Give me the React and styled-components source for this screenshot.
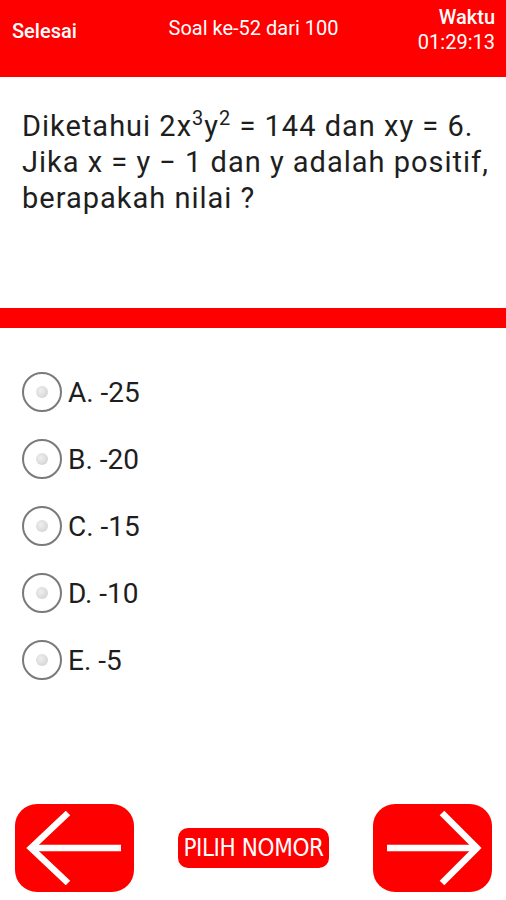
import React from "react";
import styled, { createGlobalStyle } from "styled-components";

const Global = createGlobalStyle`
  html, body { margin: 0; padding: 0; background: #fff; }
  body { font-family: Roboto, "Noto Sans", sans-serif; }
`;

const Page = styled.div`
  width: 506px;
  height: 900px;
  display: flex;
  flex-direction: column;
  background: #fff;
  overflow: hidden;
`;

const Header = styled.header`
  height: 77px;
  flex: none;
  background: #ff0000;
  color: #fff;
  display: grid;
  grid-template-columns: 1fr auto 1fr;
  align-items: start;
  padding: 0 11px 0 12px;
  font-size: 20px;
  line-height: 24px;
`;

const HeaderLeft = styled.div`
  padding-top: 19px;
  font-weight: 500;
`;

const HeaderCenter = styled.div`
  padding-top: 16px;
`;

const HeaderRight = styled.div`
  display: flex;
  flex-direction: column;
  align-items: flex-end;
  padding-top: 5px;
  font-weight: 500;
`;

const Time = styled.span`
  font-weight: 400;
  margin-top: 1px;
`;

const Question = styled.div`
  height: 231px;
  flex: none;
  padding: 31px 10px 0 22px;
  box-sizing: border-box;
  font-size: 29px;
  line-height: 36px;
  letter-spacing: 1px;
  color: #1e1e1e;
  white-space: nowrap;
`;

const Sup = styled.sup`
  font-size: 20px;
  line-height: 0;
  vertical-align: 11px;
`;

const Stripe = styled.div`
  height: 20px;
  flex: none;
  background: #ff0000;
`;

const Options = styled.div`
  display: flex;
  flex-direction: column;
  gap: 29px;
  padding: 45px 0 0 22px;
`;

const Option = styled.label`
  display: flex;
  align-items: center;
  gap: 6px;
  font-size: 28px;
  color: #1e1e1e;
  height: 38px;
`;

const Radio = styled.span`
  width: 36px;
  height: 36px;
  border: 2px solid #7a7a7a;
  border-radius: 50%;
  display: flex;
  align-items: center;
  justify-content: center;
  flex: none;
  &::after {
    content: "";
    width: 12px;
    height: 12px;
    border-radius: 50%;
    background: radial-gradient(circle at 40% 40%, #efefef, #cdcdcd);
  }
`;

const Footer = styled.div`
  margin-top: auto;
  display: flex;
  align-items: center;
  justify-content: space-between;
  padding: 0 14px 8px 15px;
`;

const NavButton = styled.button`
  width: 119px;
  height: 88px;
  border: none;
  border-radius: 22px;
  background: #ff0000;
  display: flex;
  align-items: center;
  justify-content: center;
  padding: 0;
`;

const PickButton = styled.button`
  height: 40px;
  padding: 0 5px;
  border: none;
  border-radius: 10px;
  background: #ff0000;
  color: #fff;
  font-family: "DejaVu Sans Condensed", "DejaVu Sans", sans-serif;
  font-stretch: condensed;
  font-size: 24px;
  letter-spacing: -0.4px;
`;

const Arrow = ({ dir }) => (
  <svg width="119" height="88" viewBox="0 0 119 88">
    <g stroke="#fff" strokeWidth="6.5" fill="none" strokeLinecap="butt">
      {dir === "left" ? (
        <>
          <path d="M17 44 H106" />
          <path d="M53 9 L16 44 L53 79" />
        </>
      ) : (
        <>
          <path d="M14 44 H102" />
          <path d="M69 9 L104 44 L69 79" />
        </>
      )}
    </g>
  </svg>
);

const options = ["A. -25", "B. -20", "C. -15", "D. -10", "E. -5"];

export default function App() {
  return (
    <>
      <Global />
      <Page>
        <Header>
          <HeaderLeft>Selesai</HeaderLeft>
          <HeaderCenter>Soal ke-52 dari 100</HeaderCenter>
          <HeaderRight>
            <span>Waktu</span>
            <Time>01:29:13</Time>
          </HeaderRight>
        </Header>
        <Question>
          Diketahui 2x<Sup>3</Sup>y<Sup>2</Sup> = 144 dan xy = 6.
          <br />
          Jika x = y − 1 dan y adalah positif,
          <br />
          berapakah nilai ?
        </Question>
        <Stripe />
        <Options>
          {options.map((o) => (
            <Option key={o}>
              <Radio />
              {o}
            </Option>
          ))}
        </Options>
        <Footer>
          <NavButton aria-label="Sebelumnya">
            <Arrow dir="left" />
          </NavButton>
          <PickButton>PILIH NOMOR</PickButton>
          <NavButton aria-label="Berikutnya">
            <Arrow dir="right" />
          </NavButton>
        </Footer>
      </Page>
    </>
  );
}
